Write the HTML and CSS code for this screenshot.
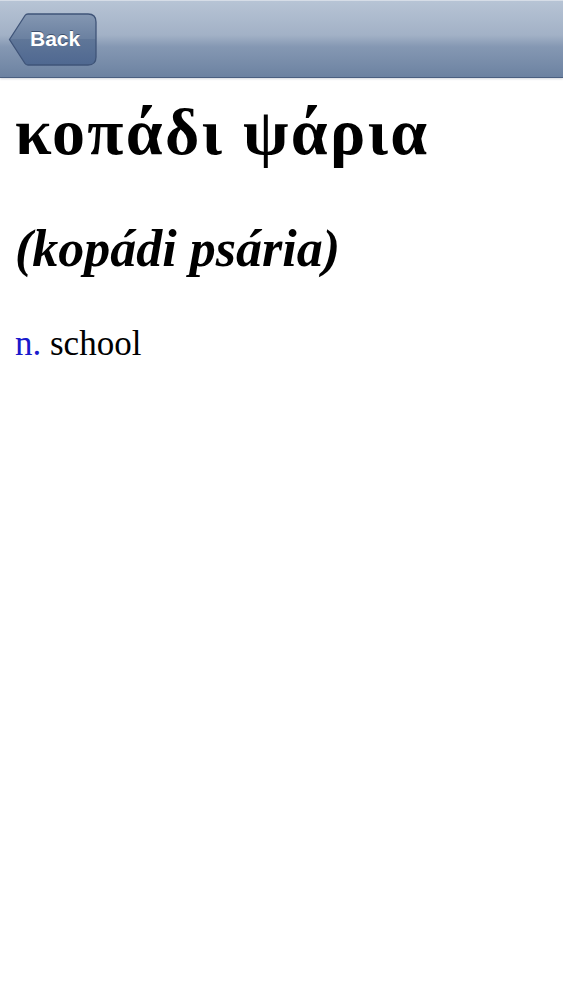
FILE: index.html
```html
<!DOCTYPE html>
<html>
<head>
<meta charset="utf-8">
<link rel="stylesheet" href="styles.css">
</head>
<body>
<header class="navbar">
  <a class="back-btn">
    <svg class="back-shape" width="90" height="53" viewBox="0 0 90 53">
      <defs>
        <linearGradient id="bg" x1="0" y1="0" x2="0" y2="1">
          <stop offset="0" stop-color="#8497b2"/>
          <stop offset="0.5" stop-color="#6a80a0"/>
          <stop offset="0.5" stop-color="#5f7698"/>
          <stop offset="1" stop-color="#4f6891"/>
        </linearGradient>
      </defs>
      <path d="M1.5 26.5 L17 2.5 Q18 1 20 1 H80 Q88 1 88 9 V44 Q88 52 80 52 H20 Q18 52 17 50.5 Z" fill="url(#bg)" stroke="#3f5478" stroke-width="1.3"/>
    </svg>
    <span class="back-label">Back</span>
  </a>
</header>
<main class="entry">
  <h1 class="headword">κοπάδι ψάρια</h1>
  <h2 class="translit">(kopádi psária)</h2>
  <p class="sense"><span class="pos">n.</span> school</p>
</main>
</body>
</html>
```
FILE: styles.css
```css
html, body {
  margin: 0;
  padding: 0;
  background: #ffffff;
}
body {
  width: 563px;
  font-family: "Liberation Serif", "Times New Roman", serif;
}
.navbar {
  height: 76px;
  border-top: 1px solid #d6dde7;
  border-bottom: 1px solid #4a5f80;
  background: linear-gradient(to bottom, #b7c4d5 0%, #a2b1c6 45%, #8598b3 60%, #6c82a1 100%);
  display: flex;
  align-items: center;
  padding-left: 8px;
  box-sizing: content-box;
  box-shadow: 0 1px 2px rgba(80, 90, 110, 0.25);
}
.back-btn {
  position: relative;
  display: block;
  width: 90px;
  height: 53px;
}
.back-shape {
  display: block;
}
.back-label {
  position: absolute;
  left: 22px;
  top: -1px;
  height: 53px;
  line-height: 53px;
  font-family: "Liberation Sans", Arial, sans-serif;
  font-weight: bold;
  font-size: 21px;
  color: #ffffff;
  text-shadow: 0 -1px 0 rgba(30, 45, 70, 0.6);
}
.entry {
  padding: 0 15px;
}
.headword {
  margin: 14px 0 0;
  font-size: 66px;
  font-weight: bold;
  letter-spacing: 2.3px;
  line-height: 80px;
  color: #000;
}
.translit {
  margin: 47px 0 0;
  font-size: 52px;
  font-weight: bold;
  font-style: italic;
  line-height: 60px;
  color: #000;
}
.sense {
  margin: 45px 0 0;
  font-size: 35px;
  line-height: 40px;
  color: #000;
}
.pos {
  color: #1a1acc;
}
```
